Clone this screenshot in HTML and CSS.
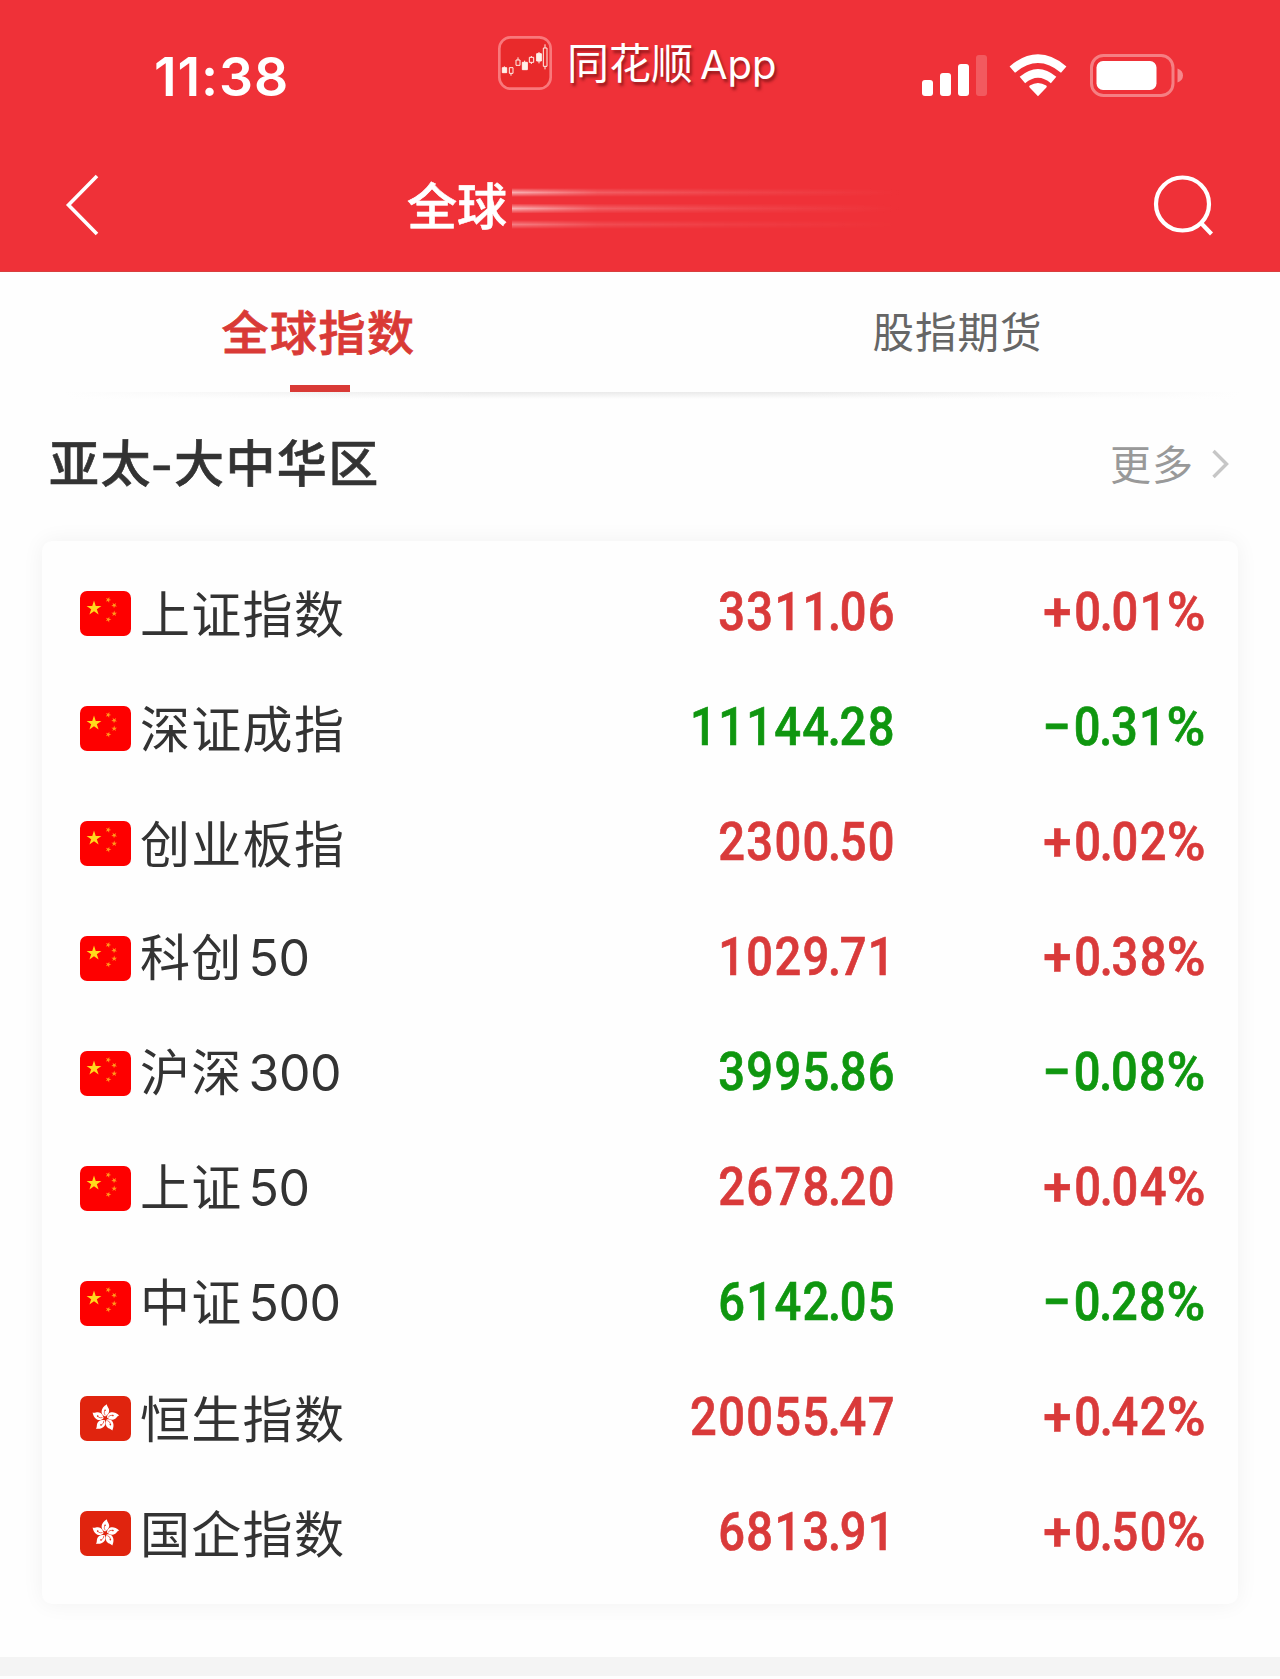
FILE: index.html
```html
<!DOCTYPE html>
<html lang="zh-CN">
<head>
<meta charset="utf-8">
<title>全球指数</title>
<link rel="stylesheet" href="styles.css">
</head>
<body>
<svg class="defs" width="0" height="0" aria-hidden="true">
  <defs>
    <path id="star" d="M0-1 .225-.309 .951-.309 .363.118 .588.809 0 .382-.588.809-.363.118-.951-.309-.225-.309z"/>
    <symbol id="cn" viewBox="0 0 51 45">
      <rect width="51" height="45" rx="7" fill="#fe0000"/>
      <g fill="#ffd91c">
        <use href="#star" transform="translate(14 17.3) scale(7.8)"/>
        <g fill="#ff9a1c">
          <use href="#star" transform="translate(28.3 8.9) rotate(20) scale(3)"/>
          <use href="#star" transform="translate(34.2 14.3) rotate(40) scale(3)"/>
          <use href="#star" transform="translate(34.2 22.6) scale(3)"/>
          <use href="#star" transform="translate(28.3 28.5) rotate(20) scale(3)"/>
        </g>
      </g>
    </symbol>
    <g id="petal">
      <path d="M-.3-1.8C-5-3.500-5.500-10 1.600-14C1.200-11.500 4.600-10 3.600-6.200C3-3.800 1-2.800-.3-1.800z" fill="#fff"/>
      <path d="M-.2-3Q-2-5-.6-8" fill="none" stroke="#e0240e" stroke-width=".6"/>
      <circle cx="-.3" cy="-8" r=".8" fill="#e0240e"/>
    </g>
    <symbol id="hk" viewBox="0 0 51 45">
      <rect width="51" height="45" rx="7" fill="#e0240e"/>
      <g transform="translate(25.400 22.300)">
        <use href="#petal"/>
        <use href="#petal" transform="rotate(72)"/>
        <use href="#petal" transform="rotate(144)"/>
        <use href="#petal" transform="rotate(216)"/>
        <use href="#petal" transform="rotate(288)"/>
      </g>
    </symbol>
  </defs>
</svg>

<header class="header">
  <div class="status">
    <span class="time">11:38</span>
    <div class="brand">
      <svg class="brand-icon" viewBox="0 0 162 162">
        <rect x="4" y="4" width="154" height="154" rx="34" fill="#e92a2b" stroke="#f9787b" stroke-width="8"/>
        <g fill="#fff0e8" stroke="#fff0e8" stroke-width="3">
          <path d="M13 95h13v15H13zM19 91v4M73 79h15v22H73zM80 74v5M116 53h14v22h-14zM123 48v34"/>
          <path d="M34 95h11v17H34zM39 112v7M54 72h12v16H54zM60 64v8M94 64h13v15H94zM100 60v4M100 79v5M136 36h11v55h-11zM141 25v11M141 91v9" fill="none"/>
        </g>
      </svg>
      <span class="brand-name">同花顺</span>
      <span class="brand-app">App</span>
    </div>
    <svg class="indicators" width="262" height="44" viewBox="0 0 262 44">
      <g fill="#fff">
        <rect x="0" y="26" width="11" height="16" rx="3"/>
        <rect x="18" y="19" width="11" height="23" rx="3"/>
        <rect x="36" y="10" width="11" height="32" rx="3"/>
        <rect x="54" y="1" width="11" height="41" rx="3" opacity=".2"/>
        <path d="M116 42.200l-8.400-8.800q-1-1 .2-1.800q8.200-5.200 16.400 0q1.200.8.200 1.800z"/>
      </g>
      <g fill="none" stroke="#fff" stroke-width="8.400">
        <path d="M90.300 15.600Q116-6.200 141.700 15.600"/>
        <path d="M100.400 26Q116 12.600 131.600 26"/>
      </g>
      <rect x="169.500" y="1.500" width="81.500" height="40" rx="12" fill="none" stroke="#fff" stroke-opacity=".38" stroke-width="3"/>
      <rect x="174.500" y="7" width="60" height="29" rx="6.500" fill="#fff"/>
      <path d="M255.500 14.500q5.500 2 5.500 7t-5.500 7z" fill="#fff" opacity=".42"/>
    </svg>
  </div>
  <div class="nav">
    <svg width="36" height="64" viewBox="0 0 36 64"><path d="M33 3 4.500 32 33 61" fill="none" stroke="#fff" stroke-width="3.600"/></svg>
    <h1 class="title">全球</h1>
    <div class="streaks"><i></i><i></i><i></i></div>
    <svg width="64" height="64" viewBox="0 0 64 64"><circle cx="30.500" cy="31" r="26.500" fill="none" stroke="#fff" stroke-width="4.200"/><path d="M49 50l10.500 11" stroke="#fff" stroke-width="4.200"/></svg>
  </div>
</header>

<nav class="tabs">
  <div class="tab active"><span>全球指数</span></div>
  <div class="tab"><span>股指期货</span></div>
</nav>

<main class="section">
  <div class="section-head">
    <h2 class="section-title">亚太<span class="dash">-</span>大中华区</h2>
    <div class="more"><span>更多</span>
      <svg width="18" height="32" viewBox="0 0 18 32"><path d="M2.500 3 15.500 16 2.500 29" fill="none" stroke="#c6c6c6" stroke-width="3.400"/></svg>
    </div>
  </div>
  <div class="card">
    <div class="row up"><svg class="flag"><use href="#cn"/></svg><span class="name">上证指数</span><span class="num">3311<i>.</i>06</span><span class="num"><u>+</u>0<i>.</i>01<em>%</em></span></div>
    <div class="row down"><svg class="flag"><use href="#cn"/></svg><span class="name">深证成指</span><span class="num">11144<i>.</i>28</span><span class="num"><u>−</u>0<i>.</i>31<em>%</em></span></div>
    <div class="row up"><svg class="flag"><use href="#cn"/></svg><span class="name">创业板指</span><span class="num">2300<i>.</i>50</span><span class="num"><u>+</u>0<i>.</i>02<em>%</em></span></div>
    <div class="row up"><svg class="flag"><use href="#cn"/></svg><span class="name">科创<b>50</b></span><span class="num">1029<i>.</i>71</span><span class="num"><u>+</u>0<i>.</i>38<em>%</em></span></div>
    <div class="row down"><svg class="flag"><use href="#cn"/></svg><span class="name">沪深<b>300</b></span><span class="num">3995<i>.</i>86</span><span class="num"><u>−</u>0<i>.</i>08<em>%</em></span></div>
    <div class="row up"><svg class="flag"><use href="#cn"/></svg><span class="name">上证<b>50</b></span><span class="num">2678<i>.</i>20</span><span class="num"><u>+</u>0<i>.</i>04<em>%</em></span></div>
    <div class="row down"><svg class="flag"><use href="#cn"/></svg><span class="name">中证<b>500</b></span><span class="num">6142<i>.</i>05</span><span class="num"><u>−</u>0<i>.</i>28<em>%</em></span></div>
    <div class="row up"><svg class="flag"><use href="#hk"/></svg><span class="name">恒生指数</span><span class="num">20055<i>.</i>47</span><span class="num"><u>+</u>0<i>.</i>42<em>%</em></span></div>
    <div class="row up"><svg class="flag"><use href="#hk"/></svg><span class="name">国企指数</span><span class="num">6813<i>.</i>91</span><span class="num"><u>+</u>0<i>.</i>50<em>%</em></span></div>
  </div>
</main>
<div class="separator"></div>
</body>
</html>
```

FILE: styles.css
```css
* { box-sizing: border-box; }

body {
  margin: 0;
  width: 1280px;
  height: 1679px;
  overflow: hidden;
  background: #fefefe;
  color: #333;
  font-family: "Noto Sans CJK SC", sans-serif;
}

svg { display: block; flex: none; }
.defs { position: absolute; }
h1, h2 { margin: 0; font-weight: 500; }

.header {
  height: 272px;
  background: #ef3138;
  border-bottom: 1px solid #d8403e;
  color: #fff;
}

.status {
  height: 140px;
  display: grid;
  grid-template-columns: 498px 424px 1fr;
  align-items: start;
}

.time {
  padding: 44px 0 0 154px;
  font: 600 53.500px/66px Inter, sans-serif;
  letter-spacing: .9px;
}

.brand {
  display: flex;
  align-items: center;
  padding-top: 36px;
  height: 90px;
  text-shadow: 2px 3px 3px rgba(90, 10, 10, .6);
}

.brand-icon { width: 54px; height: 54px; }
.brand-name { margin: -4px 0 0 15px; font-size: 42px; line-height: 54px; font-weight: 400; }
.brand-app { margin-left: 7px; font: 400 40px/54px Inter, sans-serif; padding-top: 3px; }
.indicators { margin-top: 54px; }

.nav {
  display: flex;
  align-items: center;
  height: 130px;
  padding: 0 64px;
}

.title {
  margin: -4px 0 0 307px;
  width: 105px;
  font-size: 50px;
  line-height: 60px;
  white-space: nowrap;
  -webkit-text-stroke: .6px currentColor;
}

.streaks {
  display: flex;
  flex-direction: column;
  gap: 7px;
  width: 390px;
  margin-right: 250px;
  padding-top: 7px;
}

.streaks i {
  height: 9px;
  background: linear-gradient(90deg, rgba(255, 255, 255, .62), rgba(255, 255, 255, .22) 22%, rgba(255, 255, 255, .1) 55%, transparent);
  -webkit-mask-image: linear-gradient(transparent, #000 50%, transparent);
  mask-image: linear-gradient(transparent, #000 50%, transparent);
}
.streaks i:nth-child(2) { transform: scaleY(1.15); }
.streaks i:last-child { opacity: .6; }

.tabs {
  display: grid;
  grid-template-columns: 1fr 1fr;
  height: 120px;
}

.tab {
  display: flex;
  flex-direction: column;
  align-items: center;
  font-size: 41.500px;
  line-height: 116px;
  letter-spacing: 1px;
  color: #666;
}

.tab.active { color: #d93a36; font-size: 47px; font-weight: 500; letter-spacing: 1.500px; }
.tab span { height: 113px; padding-right: 5px; }
.tab.active span { padding-right: 3px; -webkit-text-stroke: .8px currentColor; }
.tab.active::after { content: ""; width: 60px; height: 7px; background: #d93a36; }

.section { padding: 0 42px; }
.section::before {
  content: "";
  display: block;
  height: 7px;
  margin: 0 -42px;
  background: linear-gradient(90deg, #fefefe 5%, transparent 38%, transparent 62%, #fefefe 97%), linear-gradient(#eaeaea, #fefefe);
}

.section-head {
  display: flex;
  justify-content: space-between;
  align-items: center;
  height: 142px;
  padding: 0 9px 13px 7px;
}

.section-title {
  margin-top: -8px;
  font-size: 50px;
  line-height: 60px;
  letter-spacing: 1.400px;
  -webkit-text-stroke: .6px currentColor;
}
.dash { display: inline-block; transform: scaleX(1.200); margin: 0 1.500px; }
.more { display: flex; align-items: center; font-size: 41px; line-height: 60px; letter-spacing: 1px; color: #999; padding-top: 1px; }
.more span { margin-top: -5px; }
.more svg { margin-left: 17px; }

.card {
  height: 1063px;
  padding: 15px 32px 0 38px;
  border-radius: 10px;
  background: #fefefe;
  box-shadow: 0 0 22px rgba(0, 0, 0, .055);
}

.row {
  display: grid;
  grid-template-columns: 51px 450px 314px 311px;
  align-items: center;
  height: 115px;
}

.flag { width: 51px; height: 45px; }
.name { margin-top: -5px; padding-left: 9px; font-size: 50px; line-height: 70px; letter-spacing: 1.300px; }
.name b { margin-left: 6px; font-family: Inter, sans-serif; font-weight: 400; letter-spacing: -.5px; }

.num {
  justify-self: end;
  font: 500 53.500px/70px Roboto, sans-serif;
  letter-spacing: 1.500px;
  margin: -3px -1px 0 0;
  transform: scaleX(.88);
  transform-origin: right;
  -webkit-text-stroke: .7px currentColor;
}

.num i { font-style: normal; margin: 0 -3px; }
.num u { display: inline-block; text-decoration: none; transform: scaleX(1.080); margin-right: 3px; }
.num em { display: inline-block; font-style: normal; transform: scaleX(1.120); margin-left: 4px; transform-origin: right; }

.up .num { color: #d93a3a; }
.down .num { color: #0f960f; }

.separator { height: 19px; margin-top: 53px; background: #f4f4f4; }
```
